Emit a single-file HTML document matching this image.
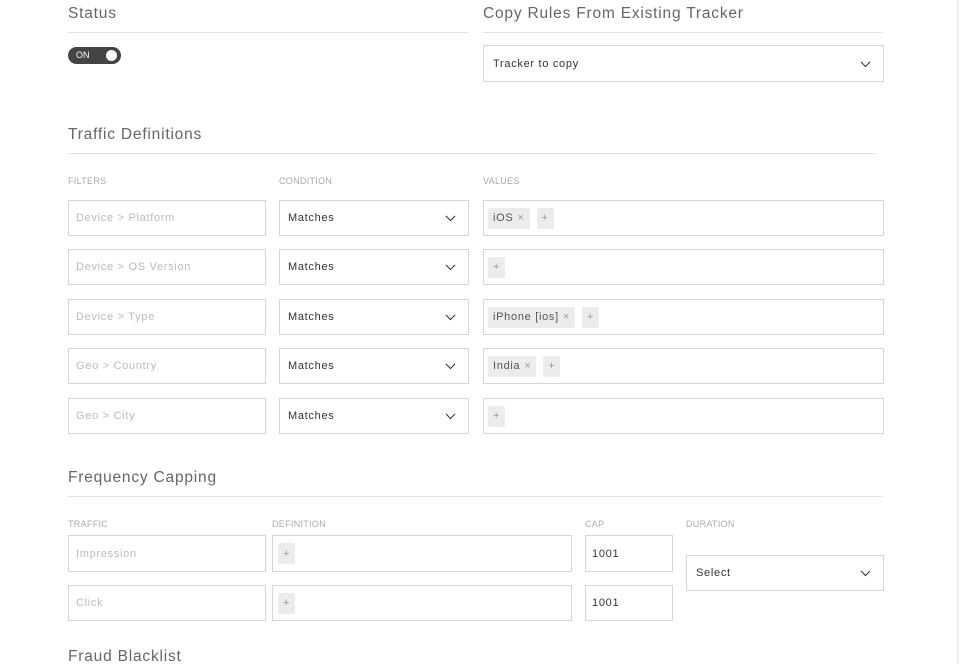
<!DOCTYPE html><html><head><style>
body{margin:0;width:960px;height:664px;overflow:hidden;background:#fff;font-family:"Liberation Sans",sans-serif;position:relative}
.a{position:absolute}
.h{font-size:15.5px;color:#666;letter-spacing:.8px}
.ln{height:1px;background:#e2e2e2}
.lb{font-size:9px;color:#aaa;letter-spacing:.3px}
.bx{position:absolute;border:1px solid #d6d6d6;box-sizing:border-box;font-size:11px;display:flex;align-items:center;padding-left:7px;letter-spacing:.7px}
.ph{color:#bbb}
.dk{color:#333}
.chev{position:absolute;right:14px;top:50%;width:6px;height:6px;border-right:1.3px solid #333;border-bottom:1.3px solid #333;transform:translateY(-75%) rotate(45deg)}
.tag{background:#ececec;border-radius:2px;height:21px;display:inline-flex;align-items:center;padding:0 5px;color:#555;font-size:11px;margin-right:7px}
.tag i{font-style:normal;color:#999;margin-left:4px;font-size:11px}
.pl{background:#ececec;border-radius:2px;height:21px;width:17px;display:inline-flex;align-items:center;justify-content:center;color:#999;font-size:11px}
</style></head><body>
<div class="a h" style="left:68px;top:5px">Status</div>
<div class="a ln" style="left:68px;top:32px;width:400px"></div>
<div class="a h" style="left:483px;top:5px">Copy Rules From Existing Tracker</div>
<div class="a ln" style="left:483px;top:32px;width:400px"></div>
<div class="a" style="left:68px;top:47px;width:53px;height:17px;border-radius:9px;background:#444"><span class="a" style="left:8px;top:3px;font-size:9px;color:#fff">ON</span><span class="a" style="right:4px;top:3px;width:11px;height:11px;border-radius:50%;background:#fff"></span></div>
<div class="bx dk" style="left:483px;top:45px;width:401px;height:37px;padding-left:9px">Tracker to copy<span class="chev"></span></div>

<div class="a h" style="left:68px;top:126px">Traffic Definitions</div>
<div class="a ln" style="left:68px;top:153px;width:808px"></div>
<div class="a lb" style="left:68px;top:176px">FILTERS</div>
<div class="a lb" style="left:279px;top:176px">CONDITION</div>
<div class="a lb" style="left:483px;top:176px">VALUES</div>

<div class="bx ph" style="left:68px;top:200px;width:198px;height:36px">Device &gt; Platform</div>
<div class="bx dk" style="left:279px;top:200px;width:190px;height:36px;padding-left:8px">Matches<span class="chev"></span></div>
<div class="bx" style="left:483px;top:200px;width:401px;height:36px;padding-left:4px"><span class="tag">iOS<i>×</i></span><span class="pl">+</span></div>

<div class="bx ph" style="left:68px;top:249px;width:198px;height:36px">Device &gt; OS Version</div>
<div class="bx dk" style="left:279px;top:249px;width:190px;height:36px;padding-left:8px">Matches<span class="chev"></span></div>
<div class="bx" style="left:483px;top:249px;width:401px;height:36px;padding-left:4px"><span class="pl">+</span></div>

<div class="bx ph" style="left:68px;top:299px;width:198px;height:36px">Device &gt; Type</div>
<div class="bx dk" style="left:279px;top:299px;width:190px;height:36px;padding-left:8px">Matches<span class="chev"></span></div>
<div class="bx" style="left:483px;top:299px;width:401px;height:36px;padding-left:4px"><span class="tag">iPhone [ios]<i>×</i></span><span class="pl">+</span></div>

<div class="bx ph" style="left:68px;top:348px;width:198px;height:36px">Geo &gt; Country</div>
<div class="bx dk" style="left:279px;top:348px;width:190px;height:36px;padding-left:8px">Matches<span class="chev"></span></div>
<div class="bx" style="left:483px;top:348px;width:401px;height:36px;padding-left:4px"><span class="tag">India<i>×</i></span><span class="pl">+</span></div>

<div class="bx ph" style="left:68px;top:398px;width:198px;height:36px">Geo &gt; City</div>
<div class="bx dk" style="left:279px;top:398px;width:190px;height:36px;padding-left:8px">Matches<span class="chev"></span></div>
<div class="bx" style="left:483px;top:398px;width:401px;height:36px;padding-left:4px"><span class="pl">+</span></div>

<div class="a h" style="left:68px;top:469px">Frequency Capping</div>
<div class="a ln" style="left:68px;top:496px;width:815px"></div>
<div class="a lb" style="left:68px;top:519px">TRAFFIC</div>
<div class="a lb" style="left:272px;top:519px">DEFINITION</div>
<div class="a lb" style="left:585px;top:519px">CAP</div>
<div class="a lb" style="left:686px;top:519px">DURATION</div>

<div class="bx ph" style="left:68px;top:535px;width:198px;height:37px">Impression</div>
<div class="bx" style="left:272px;top:535px;width:300px;height:37px;padding-left:5px"><span class="pl">+</span></div>
<div class="bx dk" style="left:585px;top:535px;width:88px;height:37px;padding-left:6px">1001</div>
<div class="bx ph" style="left:68px;top:585px;width:198px;height:36px">Click</div>
<div class="bx" style="left:272px;top:585px;width:300px;height:36px;padding-left:5px"><span class="pl">+</span></div>
<div class="bx dk" style="left:585px;top:585px;width:88px;height:36px;padding-left:6px">1001</div>
<div class="bx dk" style="left:686px;top:555px;width:198px;height:36px;padding-left:9px">Select<span class="chev"></span></div>

<div class="a h" style="left:68px;top:648px">Fraud Blacklist</div>
<div class="a" style="left:957px;top:0;width:2px;height:664px;background:#ececec"></div>
</body></html>
